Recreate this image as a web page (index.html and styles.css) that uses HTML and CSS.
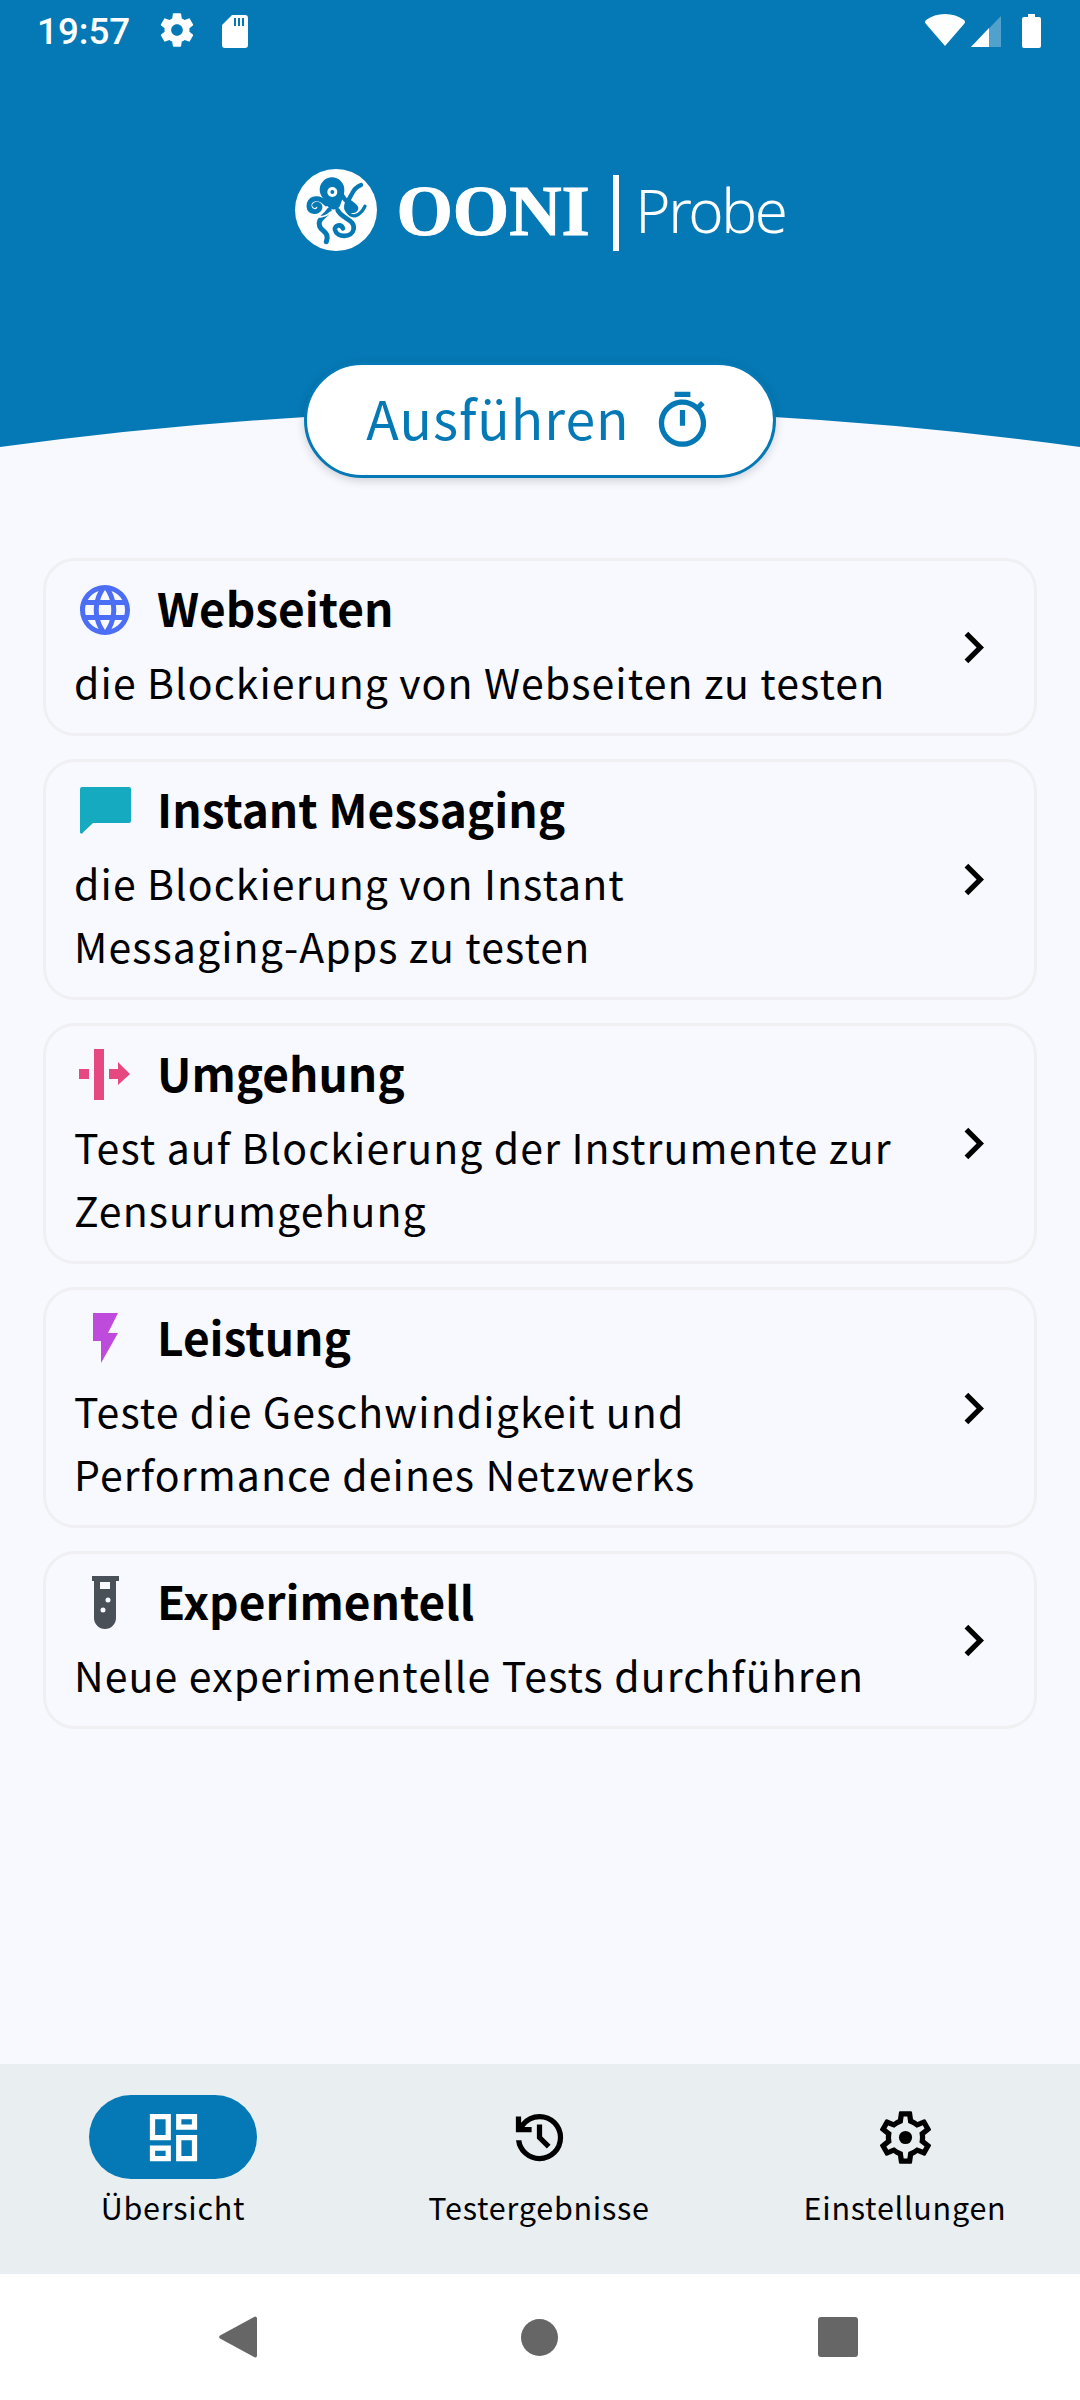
FILE: index.html
```html
<!DOCTYPE html>
<html lang="de">
<head>
<meta charset="utf-8">
<title>OONI Probe</title>
<link rel="stylesheet" href="styles.css">
</head>
<body>
<div class="screen">
  <header class="hero">
    <svg class="hero-bg" viewBox="0 0 1080 478" preserveAspectRatio="none"><path d="M0 0H1080V447Q540 373 0 447Z" fill="#0579b5"/></svg>
    <div class="status">
      <span class="time">19:57</span>
      <svg class="st-gear" viewBox="0 0 24 24"><path d="M19.43 12.98c.04-.32.07-.64.07-.98s-.03-.66-.07-.98l2.11-1.65c.19-.15.24-.42.12-.64l-2-3.46c-.12-.22-.39-.3-.61-.22l-2.49 1c-.52-.4-1.08-.73-1.69-.98l-.38-2.65C14.46 2.18 14.25 2 14 2h-4c-.25 0-.46.18-.49.42l-.38 2.65c-.61.25-1.17.59-1.69.98l-2.49-1c-.23-.09-.49 0-.61.22l-2 3.46c-.13.22-.07.49.12.64l2.11 1.65c-.04.32-.07.65-.07.98s.03.66.07.98l-2.11 1.65c-.19.15-.24.42-.12.64l2 3.46c.12.22.39.3.61.22l2.49-1c.52.4 1.08.73 1.69.98l.38 2.65c.03.24.24.42.49.42h4c.25 0 .46-.18.49-.42l.38-2.65c.61-.25 1.17-.59 1.69-.98l2.49 1c.23.09.49 0 .61-.22l2-3.46c.12-.22.07-.49-.12-.64l-2.11-1.65zM12 15.5c-1.93 0-3.5-1.57-3.5-3.5s1.57-3.5 3.5-3.5 3.5 1.57 3.5 3.5-1.57 3.5-3.5 3.5z" fill="#fff"/></svg>
      <svg class="st-sd" viewBox="0 0 26 33"><path d="M10 0H23a3 3 0 0 1 3 3V30a3 3 0 0 1-3 3H3a3 3 0 0 1-3-3V10zM12 3V11H14V3zM16 3V11H18V3zM20 3V11H22V3z" fill="#fff" fill-rule="evenodd"/></svg>
      <span class="status-gap"></span>
      <svg class="st-wifi" viewBox="0 0 40 32"><path d="M20 32L1 10Q-1 8 1 6Q9 0 20 0T39 6Q41 8 39 10Z" fill="#fff"/></svg>
      <svg class="st-signal" viewBox="0 0 30 31"><path d="M0 31L30 0V31Z" fill="#fff" opacity=".3"/><path d="M0 31L18 12V31Z" fill="#fff"/></svg>
      <svg class="st-batt" viewBox="0 0 19 34"><path d="M6 0H13V3H17a2 2 0 0 1 2 2V32a2 2 0 0 1-2 2H2a2 2 0 0 1-2-2V5a2 2 0 0 1 2-2H6Z" fill="#fff"/></svg>
    </div>
    <div class="logo">
      <svg class="logo-mark" viewBox="18 26 246 246">
        <circle cx="141" cy="149" r="123" fill="#fff"/>
        <g fill="none" stroke="#0579b5" stroke-linecap="round" stroke-linejoin="round">
          <path d="M112 130C86 104 58 116 60 138C62 158 88 158 92 144C95 134 84 128 77 135" stroke-width="15"/>
          <path d="M160 106C168 122 176 124 190 134C204 146 186 158 176 150C164 140 178 120 190 98C196 86 206 78 216 74" stroke-width="13"/>
          <path d="M174 152C190 178 214 166 228 138" stroke-width="10"/>
          <path d="M120 150C106 172 84 176 92 198C98 214 122 214 112 244" stroke-width="15"/>
          <path d="M146 150C158 176 198 176 194 206C190 232 144 234 138 208C136 194 156 190 162 204" stroke-width="14"/>
        </g>
        <path d="M70 166C88 172 110 170 124 156" fill="none" stroke="#fff" stroke-width="6" stroke-linecap="round"/>
        <path d="M92 88A36 36 0 0 1 166 88C166 108 158 118 154 134C148 152 120 152 114 134C110 118 92 108 92 88Z" fill="#0579b5"/>
        <path d="M182 116C190 124 206 132 208 142C208 156 192 162 180 156C166 146 174 128 182 116Z" fill="#0579b5"/>
        <circle cx="130" cy="95" r="15" fill="#fff"/>
        <circle cx="130" cy="95" r="6" fill="#0579b5"/>
      </svg>
      <span class="logo-ooni">OONI</span>
      <span class="logo-bar"></span>
      <span class="logo-probe">Probe</span>
    </div>
    <button class="run">
      <span class="run-label">Ausführen</span>
      <svg class="run-icon" viewBox="0 0 24 24"><path d="M15 1H9v2h6V1zm-4 13h2V8h-2v6zm8.03-6.61l1.42-1.42c-.43-.51-.9-.99-1.41-1.41l-1.42 1.42C16.07 4.74 14.12 4 12 4c-4.97 0-9 4.03-9 9s4.02 9 9 9 9-4.03 9-9c0-2.12-.74-4.07-1.97-5.61zM12 20c-3.87 0-7-3.13-7-7s3.13-7 7-7 7 3.13 7 7-3.13 7-7 7z" fill="#0579b5"/></svg>
    </button>
  </header>

  <main class="cards">
    <article class="card">
      <div class="card-text">
        <div class="card-head">
          <svg class="card-icon" viewBox="0 0 24 24"><path fill="#4c6ef5" d="M16.36,14C16.44,13.34 16.5,12.68 16.5,12C16.5,11.32 16.44,10.66 16.36,10H19.74C19.9,10.64 20,11.31 20,12C20,12.69 19.9,13.36 19.74,14M14.59,19.56C15.19,18.45 15.65,17.25 15.97,16H18.92C17.96,17.65 16.43,18.93 14.59,19.56M14.34,14H9.66C9.56,13.34 9.5,12.68 9.5,12C9.5,11.32 9.56,10.65 9.66,10H14.34C14.43,10.65 14.5,11.32 14.5,12C14.5,12.68 14.43,13.34 14.34,14M12,19.96C11.17,18.76 10.5,17.43 10.09,16H13.91C13.5,17.43 12.83,18.76 12,19.96M8,8H5.08C6.03,6.34 7.57,5.06 9.4,4.44C8.8,5.55 8.35,6.75 8,8M5.08,16H8C8.35,17.25 8.8,18.45 9.4,19.56C7.57,18.93 6.03,17.65 5.08,16M4.26,14C4.1,13.36 4,12.69 4,12C4,11.31 4.1,10.64 4.26,10H7.64C7.56,10.66 7.5,11.32 7.5,12C7.5,12.68 7.56,13.34 7.64,14M12,4.03C12.83,5.23 13.5,6.57 13.91,8H10.09C10.5,6.57 11.17,5.23 12,4.03M18.92,8H15.97C15.65,6.75 15.19,5.55 14.59,4.44C16.43,5.07 17.96,6.34 18.92,8M12,2C6.47,2 2,6.5 2,12A10,10 0 0,0 12,22A10,10 0 0,0 22,12A10,10 0 0,0 12,2Z"/></svg>
          <h2 class="card-title">Webseiten</h2>
        </div>
        <p class="card-desc">die Blockierung von Webseiten zu testen</p>
      </div>
      <svg class="chev" viewBox="0 0 24 24"><path d="M10 6L8.59 7.41 13.17 12l-4.58 4.59L10 18l6-6z"/></svg>
    </article>
    <article class="card">
      <div class="card-text">
        <div class="card-head">
          <svg class="card-icon" viewBox="0 0 60 60"><path fill="#15aabf" d="M7 6H54a2 2 0 0 1 2 2V40a2 2 0 0 1-2 2H18L8 51.5a1.5 1.5 0 0 1-3-1V8a2 2 0 0 1 2-2z"/></svg>
          <h2 class="card-title">Instant Messaging</h2>
        </div>
        <p class="card-desc">die Blockierung von Instant<br>Messaging-Apps zu testen</p>
      </div>
      <svg class="chev" viewBox="0 0 24 24"><path d="M10 6L8.59 7.41 13.17 12l-4.58 4.59L10 18l6-6z"/></svg>
    </article>
    <article class="card">
      <div class="card-text">
        <div class="card-head">
          <svg class="card-icon" viewBox="0 0 60 60"><path fill="#e64980" d="M4 24H14V34H4ZM19 4H29V55H19ZM34 24H43V17L55 29L43 40V34H34Z"/></svg>
          <h2 class="card-title">Umgehung</h2>
        </div>
        <p class="card-desc">Test auf Blockierung der Instrumente zur<br>Zensurumgehung</p>
      </div>
      <svg class="chev" viewBox="0 0 24 24"><path d="M10 6L8.59 7.41 13.17 12l-4.58 4.59L10 18l6-6z"/></svg>
    </article>
    <article class="card">
      <div class="card-text">
        <div class="card-head">
          <svg class="card-icon" viewBox="0 0 60 60"><path fill="#be4bdb" d="M18 4H43L33 24H43L26 54V32H18Z"/></svg>
          <h2 class="card-title">Leistung</h2>
        </div>
        <p class="card-desc">Teste die Geschwindigkeit und<br>Performance deines Netzwerks</p>
      </div>
      <svg class="chev" viewBox="0 0 24 24"><path d="M10 6L8.59 7.41 13.17 12l-4.58 4.59L10 18l6-6z"/></svg>
    </article>
    <article class="card">
      <div class="card-text">
        <div class="card-head">
          <svg class="card-icon" viewBox="0 0 60 60"><path fill="#495057" fill-rule="evenodd" d="M17 3H44V8H41V45A11 11 0 0 1 19 45V8H17ZM25 9V16H35V9ZM33 24.500A2.500 2.500 0 1 0 33 29.500A2.500 2.500 0 1 0 33 24.500ZM28 34.500A2.500 2.500 0 1 0 28 39.500A2.500 2.500 0 1 0 28 34.500Z"/></svg>
          <h2 class="card-title">Experimentell</h2>
        </div>
        <p class="card-desc">Neue experimentelle Tests durchführen</p>
      </div>
      <svg class="chev" viewBox="0 0 24 24"><path d="M10 6L8.59 7.41 13.17 12l-4.58 4.59L10 18l6-6z"/></svg>
    </article>
  </main>

  <nav class="tabs">
    <div class="tab">
      <div class="tab-pill tab-pill-on"><svg class="tab-icon" viewBox="0 0 24 24"><path fill="#fff" d="M19 5v2h-4V5h4M9 5v6H5V5h4m10 8v6h-4v-6h4M9 17v2H5v-2h4M21 3h-8v6h8V3zM11 3H3v10h8V3zm10 8h-8v10h8V11zm-10 4H3v6h8v-6z"/></svg></div>
      <span class="tab-label">Übersicht</span>
    </div>
    <div class="tab">
      <div class="tab-pill"><svg class="tab-icon" viewBox="0 0 24 24"><path d="M12 21q-3.45 0-6.010-2.290Q3.430 16.430 3.050 13h2.050q.35 2.600 2.310 4.300Q9.380 19 12 19q2.930 0 4.960-2.040Q19 14.930 19 12t-2.040-4.960Q14.930 5 12 5q-1.730 0-3.220.8Q7.300 6.600 6.250 8H9v2H3V4h2v2.350Q6.280 4.750 8.110 3.880 9.950 3 12 3q3.750 0 6.380 2.630Q21 8.250 21 12t-2.630 6.380Q15.750 21 12 21zm2.800-4.800L11 12.400V7h2v4.600l3.200 3.200-1.400 1.400z"/></svg></div>
      <span class="tab-label">Testergebnisse</span>
    </div>
    <div class="tab">
      <div class="tab-pill"><svg class="tab-icon" viewBox="0 0 24 24"><path d="M19.430 12.980c.04-.32.07-.64.07-.98 0-.34-.03-.66-.07-.98l2.110-1.650c.19-.15.24-.42.12-.64l-2-3.460c-.09-.16-.26-.25-.44-.25-.06 0-.12.01-.17.03l-2.490 1c-.52-.4-1.080-.73-1.690-.98l-.38-2.650C14.460 2.180 14.250 2 14 2h-4c-.25 0-.46.18-.49.42l-.38 2.650c-.61.25-1.170.59-1.690.98l-2.490-1c-.06-.02-.12-.03-.18-.03-.17 0-.34.09-.43.25l-2 3.460c-.13.22-.07.49.12.64l2.110 1.650c-.04.32-.07.65-.07.98 0 .33.03.66.07.98l-2.110 1.650c-.19.15-.24.42-.12.64l2 3.460c.09.16.26.25.44.25.06 0 .12-.01.17-.03l2.490-1c.52.4 1.080.73 1.690.98l.38 2.650c.03.24.24.42.49.42h4c.25 0 .46-.18.49-.42l.38-2.650c.61-.25 1.170-.59 1.690-.98l2.490 1c.06.02.12.03.18.03.17 0 .34-.09.43-.25l2-3.460c.12-.22.07-.49-.12-.64l-2.110-1.650zm-1.980-1.710c.04.31.05.52.05.73 0 .21-.02.43-.05.73l-.14 1.130.89.7 1.080.84-.7 1.210-1.270-.51-1.040-.42-.9.68c-.43.32-.84.56-1.250.73l-1.060.43-.16 1.130-.2 1.350h-1.400l-.19-1.350-.16-1.130-1.060-.43c-.43-.18-.83-.41-1.230-.71l-.91-.7-1.060.43-1.270.51-.7-1.210 1.080-.84.89-.7-.14-1.130c-.03-.31-.05-.54-.05-.74s.02-.43.05-.73l.14-1.130-.89-.7-1.080-.84.7-1.210 1.270.51 1.040.42.9-.68c.43-.32.84-.56 1.250-.73l1.060-.43.16-1.130.2-1.350h1.390l.19 1.350.16 1.130 1.060.43c.43.18.83.41 1.230.71l.91.7 1.060-.43 1.270-.51.7 1.210-1.070.85-.89.7.14 1.130z"/><circle cx="12" cy="12" r="2.500"/></svg></div>
      <span class="tab-label">Einstellungen</span>
    </div>
  </nav>

  <footer class="sysnav">
    <svg class="nav-back" viewBox="0 0 38 42"><path d="M36 0.500A2 2 0 0 1 38 2V40A2 2 0 0 1 36 41.500L1 22.500A2 2 0 0 1 1 19.500Z" fill="#666"/></svg>
    <span class="nav-home"></span>
    <span class="nav-recent"></span>
  </footer>
</div>
</body>
</html>
```

FILE: styles.css
```css
* { box-sizing: border-box; }
html, body { margin: 0; padding: 0; }
body { font-family: "Noto Sans CJK SC", "Noto Sans", sans-serif; color: #000; }
.screen { width: 1080px; height: 2400px; display: flex; flex-direction: column; background: #f8f9ff; overflow: hidden; }

.hero { position: relative; height: 478px; display: flex; flex-direction: column; align-items: center; flex: none; }
.hero-bg { position: absolute; left: 0; top: 0; width: 1080px; height: 478px; }
.status { position: relative; align-self: stretch; height: 64px; display: flex; align-items: flex-start; padding: 14px 39px 0 37px; }
.time { font-family: Roboto, sans-serif; font-size: 36.75px; font-weight: 500; line-height: 36px; color: #fff; }
.st-gear { width: 40px; height: 40px; margin: -4px 0 0 27px; }
.st-sd { width: 26px; height: 33px; margin: 1px 0 0 25px; }
.status-gap { flex: 1; }
.st-wifi { width: 40px; height: 32px; }
.st-signal { width: 30px; height: 31px; margin: 2px 0 0 6px; }
.st-batt { width: 19px; height: 34px; margin: 0 0 0 21px; }

.logo { position: relative; display: flex; align-items: center; margin-top: 105px; height: 81px; margin-left: 1px; }
.logo-mark { width: 82px; height: 82px; }
.logo-ooni { font-family: "Liberation Serif", serif; font-weight: 700; font-size: 72.5px; line-height: 81px; color: #fff; margin-left: 19px; margin-top: 2px; -webkit-text-stroke: 1px #fff; }
.logo-bar { width: 6px; height: 76px; background: #fff; margin-left: 23.5px; margin-top: 7px; }
.logo-probe { font-family: "Noto Sans", sans-serif; font-weight: 300; font-size: 60px; line-height: 81px; color: #fff; margin-left: 16px; margin-top: 2px; letter-spacing: -2.4px; }

.run { position: relative; width: 472px; height: 116px; margin-top: 112px; display: flex; align-items: center; justify-content: center; gap: 21px; background: #fff; border: 3px solid #0579b5; border-radius: 58px; box-shadow: 0 3px 10px rgba(0, 0, 0, .16); color: #0579b5; font-family: inherit; font-size: 53.5px; letter-spacing: 1px; padding: 0; }
.run-label { margin-bottom: 8px; }
.run-icon { width: 63px; height: 63px; }

.cards { flex: 1; display: flex; flex-direction: column; gap: 23.1px; padding: 80px 43px 0; }
.card { display: flex; align-items: center; background: #f8f9ff; border: 3px solid #f0f0f2; border-radius: 32px; padding: 19px 29px 20.5px 29px; }
.card-text { flex: 1; min-width: 0; }
.card-head { display: flex; align-items: center; height: 60px; gap: 23px; margin-bottom: 9.5px; }
.card-icon { width: 60px; height: 60px; flex: none; }
.card-title { margin: -6px 0 0 -1px; font-size: 46px; font-weight: 700; line-height: 60px; }
.card-desc { margin: 0 0 0 -1px; font-size: 41px; line-height: 63px; letter-spacing: 1.1px; }
.chev { width: 63px; height: 63px; flex: none; margin-top: 2px; }

.tabs { height: 210px; flex: none; display: grid; grid-template-columns: repeat(3, 346px); column-gap: 20px; padding: 31px 0 0; background: #e9eef0; }
.tab { display: flex; flex-direction: column; align-items: center; }
.tab-pill { width: 168px; height: 84px; border-radius: 42px; display: flex; align-items: center; justify-content: center; }
.tab-pill-on { background: #0579b5; }
.tab-icon { width: 63px; height: 63px; }
.tab-label { font-size: 30.5px; line-height: 42px; letter-spacing: 0.75px; margin-top: 6.5px; }

.sysnav { height: 126px; flex: none; background: #fff; display: flex; align-items: center; padding-left: 219px; }
.nav-back { width: 38px; height: 42px; }
.nav-home { width: 37px; height: 37px; border-radius: 50%; background: #666; margin-left: 264px; }
.nav-recent { width: 40px; height: 40px; border-radius: 3px; background: #666; margin-left: 260px; }
```
